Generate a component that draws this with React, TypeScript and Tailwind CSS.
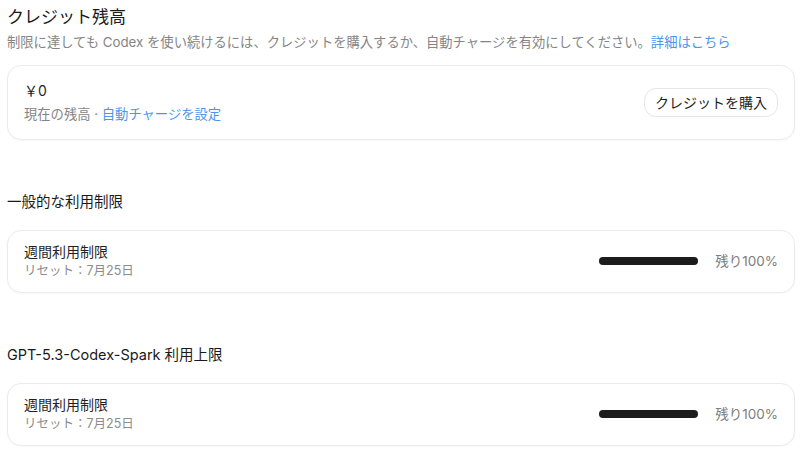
const font = 'font-["Inter","Noto_Sans_CJK_JP",sans-serif]';

function UsageRow({ title, reset, remaining }: { title: string; reset: string; remaining: number }) {
  return (
    <div className="flex items-center justify-between rounded-[14px] border border-[#ebebeb] bg-white pl-4 pr-4 pt-[11px] pb-[12px] shadow-[0_1px_2px_rgba(0,0,0,0.03)]">
      <div className="flex flex-col">
        <span className="text-[14px] leading-5 text-[#1f1f1f]">{title}</span>
        <span className="text-[12.5px] leading-[18px] text-[#8c8c8c]">{reset}</span>
      </div>
      <div className="flex items-center gap-[17px]">
        <div className="h-[8px] w-[99px] rounded-full bg-[#e5e5e5]">
          <div className="h-full rounded-full bg-[#1c1c1c]" style={{ width: `${remaining}%` }} />
        </div>
        <span className="text-[13.5px] leading-5 text-[#7d7d7d]">残り{remaining}%</span>
      </div>
    </div>
  );
}

export default function App() {
  return (
    <div className={`${font} min-h-[457px] bg-white pl-[7px] pr-[5px] pt-[5px]`}>
      <h2 className="text-[17px] leading-6 text-[#1a1a1a]">クレジット残高</h2>
      <p className="mt-[3px] text-[13.3px] leading-5 text-[#858585]">
        制限に達しても Codex を使い続けるには、クレジットを購入するか、自動チャージを有効にしてください。
        <a className="text-[#4d94ee]">詳細はこちら</a>
      </p>

      <div className="mt-[13px] flex items-center justify-between rounded-[14px] border border-[#ebebeb] bg-white px-4 py-[15px] shadow-[0_1px_2px_rgba(0,0,0,0.03)]">
        <div className="flex flex-col gap-[3px]">
          <span className="text-[14px] leading-5 text-[#1f1f1f]">￥0</span>
          <span className="text-[13.3px] leading-5 text-[#858585]">
            現在の残高 · <a className="text-[#4d94ee]">自動チャージを設定</a>
          </span>
        </div>
        <button className="h-[29px] rounded-[12px] border border-[#e6e6e6] bg-white px-[10px] text-[14px] text-[#1f1f1f]">
          クレジットを購入
        </button>
      </div>

      <h3 className="mt-[52px] text-[14.5px] leading-5 text-[#1a1a1a]">一般的な利用制限</h3>
      <div className="mt-[18px]">
        <UsageRow title="週間利用制限" reset="リセット：7月25日" remaining={100} />
      </div>

      <h3 className="mt-[52px] text-[14.5px] leading-5 text-[#1a1a1a]">GPT-5.3-Codex-Spark 利用上限</h3>
      <div className="mt-[18px]">
        <UsageRow title="週間利用制限" reset="リセット：7月25日" remaining={100} />
      </div>
    </div>
  );
}
